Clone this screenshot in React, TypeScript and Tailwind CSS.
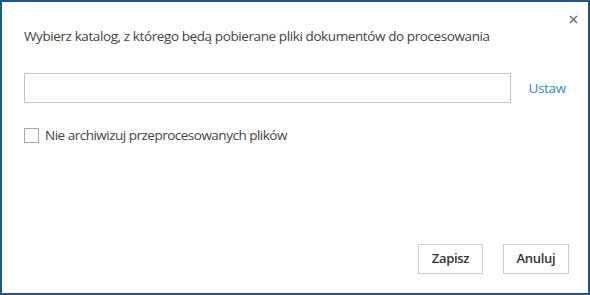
import React from "react";

export default function App() {
  return (
    <div className="w-[590px] h-[295px] bg-white border-2 border-[#1f5685] relative flex flex-col text-[#444]" style={{ fontFamily: '"Open Sans", "Noto Sans", sans-serif' }}>
      <button className="absolute right-[7px] top-[9px] w-[16px] h-[16px] flex items-center justify-center text-[#777]">
        <svg width="9" height="9" viewBox="0 0 9 9"><path d="M1 1L8 8M8 1L1 8" stroke="#6f6f6f" strokeWidth="1.5" /></svg>
      </button>
      <div className="pl-[22px] pr-[22px] pt-[24px] flex flex-col">
        <div className="text-[13.5px] leading-[20px] tracking-[-0.4px]">Wybierz katalog, z którego będą pobierane pliki dokumentów do procesowania</div>
        <div className="mt-[27px] flex items-center">
          <div className="w-[494px] h-[30px] border border-[#c6c6c6] bg-white" />
          <span className="ml-[17px] text-[13.5px] tracking-[-0.3px] text-[#2a8ad4]">Ustaw</span>
        </div>
        <label className="mt-[22px] flex items-center gap-[6px] text-[13.5px] tracking-[-0.5px]">
          <span className="w-[15px] h-[15px] border border-[#a8a8a8] bg-white" />
          <span>Nie archiwizuj przeprocesowanych plików</span>
        </label>
      </div>
      <div className="mt-auto mb-[19px] mr-[19px] flex justify-end gap-[20px]">
        <button className="w-[65px] h-[30px] border border-[#cfcfcf] bg-white text-[13px] font-semibold tracking-[-0.3px] text-[#333]">Zapisz</button>
        <button className="w-[66px] h-[30px] border border-[#cfcfcf] bg-white text-[13px] font-semibold tracking-[-0.3px] text-[#333]">Anuluj</button>
      </div>
    </div>
  );
}
